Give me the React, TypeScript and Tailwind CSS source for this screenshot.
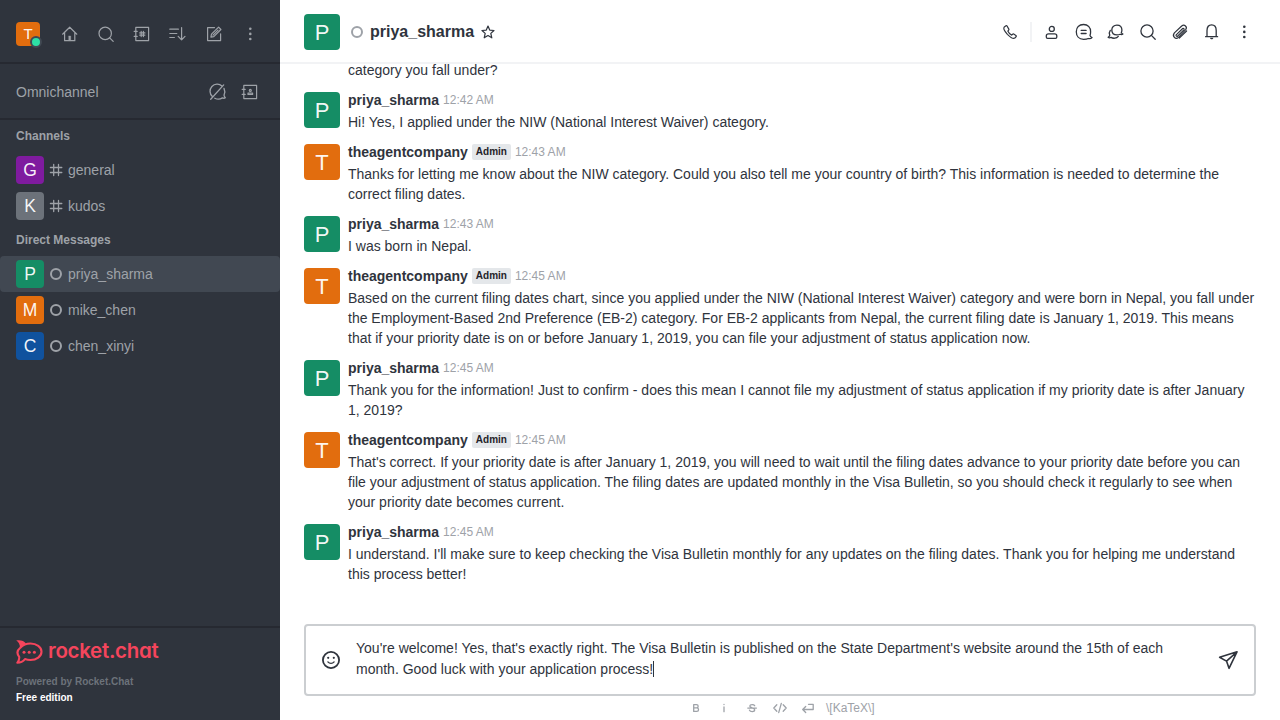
import type { ReactNode } from 'react';

function Icon({ children, size = 20, sw = 1.2, className = '' }: { children: ReactNode; size?: number; sw?: number; className?: string }) {
  return (
    <svg
      width={size}
      height={size}
      viewBox={`0 0 ${size} ${size}`}
      fill="none"
      stroke="currentColor"
      strokeWidth={sw}
      strokeLinecap="round"
      strokeLinejoin="round"
      className={`block shrink-0 ${className}`}
    >
      {children}
    </svg>
  );
}

const Kebab = () => (
  <Icon>
    <g fill="currentColor" stroke="none">
      <circle cx="10.3" cy="4.8" r="1.3" />
      <circle cx="10.3" cy="9.9" r="1.3" />
      <circle cx="10.3" cy="15" r="1.3" />
    </g>
  </Icon>
);

const Search = () => (
  <Icon sw={1.3}>
    <circle cx="9" cy="9" r="6.1" />
    <path d="M13.4 13.4 17.2 17.2" />
  </Icon>
);

const Home = () => (
  <Icon>
    <path d="M2.6 10.2 9.7 3.2l7.1 7M4.6 8.6v8.1h10.2V8.6" />
    <path d="M8.8 12h1.9v4.6H8.8z" fill="currentColor" strokeWidth="0.4" />
  </Icon>
);

const Directory = () => (
  <Icon>
    <path d="M3.8 3.4h12.8v13.2H3.8zM2.2 7.4h3M2.2 12.4h3" />
    <path d="M9.2 7.4v5.2M11.4 7.4v5.2M7.7 8.9h5.2M7.7 11.1h5.2" />
  </Icon>
);

const Sort = () => (
  <Icon>
    <path d="M1.8 5.2h8.6M1.8 9.5h7M1.8 13.5h4.6M13.6 3.6v12.2M10.2 12.4l3.4 3.5 3.4-3.5" />
  </Icon>
);

const Compose = () => (
  <Icon>
    <path d="M10.5 3.6H3.6v13h13v-6.8" />
    <path d="M6.9 13.2l.6-3 7.1-7.1 2.3 2.4-7.1 7.1zM9 11.2l5-5" />
  </Icon>
);

const LivechatOff = () => (
  <Icon sw={1.3}>
    <path d="M4.4 14.6A7.1 7.1 0 0 1 14 4M16 6.4c1.1 2.2 1 4.6 0 6.8.2 1.200.7 2 1.300 2.600-.9.6-2 .5-2.900.1-2.200 1.500-5.400 1.500-7.600.3M2.700 17.300 15.700 2.900" />
  </Icon>
);

const Contacts = () => (
  <Icon>
    <path d="M3.8 3.4h12.8v13.2H3.8zM2.2 7.4h3M2.2 12.4h3" />
    <circle cx="10.3" cy="8.4" r="1" />
    <path d="M8 11h4.6v1.4H8z" />
  </Icon>
);

const Hash = () => (
  <Icon size={16} sw={1.3}>
    <path d="M5.7 2.5v11M10.500 2.500v11M2.400 5.500h11.400M2.400 10.500h11.400" />
  </Icon>
);

const Phone = () => (
  <Icon>
    <path d="M6 3.8 4.3 4.900C3.200 6 4.400 9 7.400 12.300c3 3 6 4.600 7.400 3.800l1.400-1.600c.3-.4.1-.8-.3-1.100l-2.200-1.300c-.5-.3-.8-.1-1.100.2l-.9.8c-1.300-.5-3.100-2.300-3.900-4l.9-.9c.3-.3.3-.7.1-1.100L7.200 4.200c-.3-.5-.7-.6-1.200-.4z" />
  </Icon>
);

const User = () => (
  <Icon sw={1.3}>
    <circle cx="9.8" cy="6.900" r="2.500" />
    <path d="M6.600 11.800h6c1.300 0 2.200.9 2.200 2.100v1.200c0 .8-.5 1.300-1.300 1.300H5.600c-.8 0-1.300-.5-1.300-1.300v-1.200c0-1.200.9-2.100 2.300-2.100z" />
  </Icon>
);

const Threads = () => (
  <Icon sw={1.3}>
    <path d="M9.600 2.500c4.200 0 7 3 7 7.200 0 1.500-.1 2.600-.6 3.600.2 1.100 1 1.800 2 2.300-.9 1-2.400 1.300-3.800.9-1.300.8-2.800.8-4.600.8-4.700 0-7.300-3.300-7.300-7.600s2.700-7.200 7.300-7.200z" />
    <path d="M7.200 8.400h4.900M7.200 11.500h4.900" />
  </Icon>
);

const Discussion = () => (
  <Icon sw={1.3}>
    <path d="M10.900 3.100c3 0 5 2 5 5 0 1-.2 1.800-.6 2.500.2.600.8 1 1.600 1.400-.7.6-1.800.7-2.700.2-.9.500-2 .7-3.200.7-3.200 0-5.200-2-5.200-4.900s2-4.900 5.100-4.900z" />
    <path d="M4.300 8.400c-1 1.400-1.200 3.200-.5 4.800-.2 1-.8 1.600-1.700 2.100.8.600 1.900.6 2.900.1 2.200 1.400 5.600 1.100 7.300-1" />
  </Icon>
);

const Clip = () => (
  <Icon>
    <path d="M4.400 10.900 11.700 4c2.700-2.200 6 1 4 3.600l-7.200 7.800c-2.900 2.600-6.900-1-4.100-4.500z" />
    <path d="M16.600 9 9.300 16M6.200 12.900l6.500-6.400c.9-.6 1.900.3 1.200 1.300l-6.300 6.400c-.9.5-2-.3-1.400-1.300z" />
  </Icon>
);

const Bell = () => (
  <Icon sw={1.3}>
    <path d="M3.600 14.700h12M5 14.500V8.500c0-3.300 1.800-5.700 4.600-5.700s4.600 2.400 4.600 5.700v6" />
    <path d="M8 15.800h3.400c-.3 1-.9 1.500-1.700 1.500S8.300 16.800 8 15.800z" fill="currentColor" stroke="none" />
  </Icon>
);

const tileColors: Record<string, string> = {
  T: 'bg-[#e26d0e]',
  P: 'bg-[#158d65]',
  G: 'bg-[#7f1b9f]',
  K: 'bg-[#6c727a]',
  M: 'bg-[#e26d0e]',
  C: 'bg-[#10529e]',
};

function Avatar({ letter, className }: { letter: string; className: string }) {
  return <div className={`flex shrink-0 items-center justify-center rounded-[4px] text-white/95 ${tileColors[letter]} ${className}`}>{letter}</div>;
}

function Status({ className = '' }: { className?: string }) {
  return <span className={`block size-3 shrink-0 rounded-full border-2 border-[#9ea2a8] ${className}`} />;
}

function Item({ name, channel, active }: { name: string; channel?: boolean; active?: boolean }) {
  return (
    <li className={`flex h-9 items-center px-4 ${active ? 'rounded-[4px] bg-[#414852]' : ''}`}>
      <Avatar letter={name[0].toUpperCase()} className="size-7 text-[17.5px] leading-7" />
      <span className="ml-1 flex w-4 justify-center">{channel ? <Hash /> : <Status />}</span>
      <span className="ml-1">{name}</span>
    </li>
  );
}

function Sidebar() {
  return (
    <aside className="flex w-[280px] shrink-0 flex-col bg-[#2f343d] text-[14px] leading-5 text-[#9ea2a8]">
      <div className="flex h-16 items-center border-b-2 border-[#262931] px-4 pt-1.5">
        <div className="relative">
          <Avatar letter="T" className="size-6 text-[15px] leading-6" />
          <span className="absolute -right-[2px] -bottom-[2px] size-3 rounded-full border-2 border-[#414852] bg-[#2de0a5]" />
        </div>
        <div className="ml-5 flex gap-4">
          <Home />
          <Icon>
            <circle cx="9.2" cy="9.4" r="6.2" />
            <path d="M13.7 13.9 17.2 17.4" />
          </Icon>
          <Directory />
          <Sort />
          <Compose />
          <Kebab />
        </div>
      </div>
      <div className="flex h-14 items-center justify-between border-b-2 border-[#262931] pt-0.5 pr-5 pl-4">
        <span>Omnichannel</span>
        <span className="flex gap-3">
          <LivechatOff />
          <Contacts />
        </span>
      </div>
      <nav className="flex-1">
        <h3 className="flex h-8 items-center pl-4 text-[12px] font-bold">Channels</h3>
        <ul>
          <Item name="general" channel />
          <Item name="kudos" channel />
        </ul>
        <h3 className="flex h-8 items-center pl-4 text-[12px] font-bold">Direct Messages</h3>
        <ul>
          <Item name="priya_sharma" active />
          <Item name="mike_chen" />
          <Item name="chen_xinyi" />
        </ul>
      </nav>
      <footer className="h-[94px] border-t-2 border-[#262931] px-4 pt-3">
        <div className="flex h-6 text-[#f5455c]">
          <svg width="28" height="24" viewBox="0 0 28 24" className="block shrink-0">
            <path
              d="M4.300 7.700C7 4.700 11 3.500 14.500 3.500c6 0 11 3.600 11 8.200s-5 8.300-11 8.300c-2 0-3.900-.3-5.500-.9-2 2.500-4.500 3.700-7.700 3.700 1.700-2.300 2.200-4.200 1.900-6-2.400-3-2.400-6.300 1.100-9.100z"
              fill="none"
              stroke="currentColor"
              strokeWidth="2.1"
              strokeLinejoin="round"
            />
            <path d="M.2.5C4-.3 8.300.8 10 3.600L4 8.200C4.100 4.700 2.800 2.200.2.5z" fill="currentColor" />
            <g fill="currentColor">
              <circle cx="8" cy="12.200" r="1.500" />
              <circle cx="13.200" cy="12.200" r="1.500" />
              <circle cx="18.400" cy="12.200" r="1.500" />
            </g>
          </svg>
          <span className="ml-1 font-[Inter,sans-serif] text-[20.5px] leading-[22px] font-semibold tracking-[-0.3px] [font-feature-settings:'cv11','ss03']">rocket.chat</span>
        </div>
        <p className="mt-2.5 text-[10px] leading-4 font-bold text-[#6c727a]">Powered by Rocket.Chat</p>
        <p className="text-[10px] leading-4 font-bold text-white">Free edition</p>
      </footer>
    </aside>
  );
}

const messages = [
  { user: 'priya_sharma', time: '12:42 AM', text: 'Hi! Yes, I applied under the NIW (National Interest Waiver) category.' },
  {
    user: 'theagentcompany',
    time: '12:43 AM',
    text: 'Thanks for letting me know about the NIW category. Could you also tell me your country of birth? This information is needed to determine the correct filing dates.',
  },
  { user: 'priya_sharma', time: '12:43 AM', text: 'I was born in Nepal.' },
  {
    user: 'theagentcompany',
    time: '12:45 AM',
    text: 'Based on the current filing dates chart, since you applied under the NIW (National Interest Waiver) category and were born in Nepal, you fall under the Employment-Based 2nd Preference (EB-2) category. For EB-2 applicants from Nepal, the current filing date is January 1, 2019. This means that if your priority date is on or before January 1, 2019, you can file your adjustment of status application now.',
  },
  {
    user: 'priya_sharma',
    time: '12:45 AM',
    text: 'Thank you for the information! Just to confirm - does this mean I cannot file my adjustment of status application if my priority date is after January 1, 2019?',
  },
  {
    user: 'theagentcompany',
    time: '12:45 AM',
    text: "That's correct. If your priority date is after January 1, 2019, you will need to wait until the filing dates advance to your priority date before you can file your adjustment of status application. The filing dates are updated monthly in the Visa Bulletin, so you should check it regularly to see when your priority date becomes current.",
  },
  {
    user: 'priya_sharma',
    time: '12:45 AM',
    text: "I understand. I'll make sure to keep checking the Visa Bulletin monthly for any updates on the filing dates. Thank you for helping me understand this process better!",
  },
];

function Message({ user, time, text }: { user: string; time: string; text: string }) {
  return (
    <li className="flex gap-2 pr-6 pb-2 pl-6">
      <Avatar letter={user[0].toUpperCase()} className="mt-1 size-9 pt-0.5 text-[22px] leading-8" />
      <div className="min-w-0 flex-1 pt-0.5">
        <div className="flex h-5 items-center gap-1">
          <span className="font-bold">{user}</span>
          {user === 'theagentcompany' && (
            <span className="h-4 rounded-[2px] bg-[#e4e7ea] px-1 text-[10px] leading-4 font-bold text-[#1f2329]">Admin</span>
          )}
          <span className="text-[12px] text-[#9ea2a8]">{time}</span>
        </div>
        <p className="mt-0.5">{text}</p>
      </div>
    </li>
  );
}

export default function App() {
  return (
    <div className="flex h-[720px] w-[1280px] overflow-hidden bg-white font-['Liberation_Sans',Arial,sans-serif]">
      <Sidebar />
      <main className="flex min-w-0 flex-1 flex-col text-[14px] leading-5 text-[#2f343d]">
        <header className="flex h-16 shrink-0 items-center border-b-2 border-[#f2f3f5] pr-[26px] pl-6">
          <Avatar letter="P" className="mt-0.5 size-9 pt-0.5 text-[22px] leading-8" />
          <Status className="mt-0.5 ml-[11px]" />
          <h1 className="mt-0.5 ml-[7px] text-[16px] leading-6 font-bold">priya_sharma</h1>
          <Icon size={16} sw={1.2} className="mt-0.5 ml-1.5">
            <path d="M8 2 9.7 6.1 14 6.5 10.800 9.400 11.800 13.800 8 11.500 4.200 13.800 5.200 9.400 2 6.500 6.300 6.100z" />
          </Icon>
          <div className="mt-0.5 ml-auto flex items-center">
            <Phone />
            <span className="mr-2.5 ml-2.5 block h-5 w-0.5 bg-[#f2f3f5]" />
            <div className="flex gap-3">
              <User />
              <Threads />
              <Discussion />
              <Search />
              <Clip />
              <Bell />
              <Kebab />
            </div>
          </div>
        </header>
        <ul className="flex min-h-0 flex-1 flex-col justify-end overflow-hidden pb-8">
          <li className="pb-2 pl-[68px]">category you fall under?</li>
          {messages.map((m, i) => (
            <Message key={i} {...m} />
          ))}
        </ul>
        <section className="mx-6 flex h-[72px] shrink-0 items-center rounded-[4px] border-2 border-[#cbced1] pr-4 pl-[15px]">
          <Icon sw={1.8}>
            <circle cx="10" cy="10" r="8.1" />
            <circle cx="7.2" cy="7.8" r="1.1" fill="currentColor" stroke="none" />
            <circle cx="12.800" cy="7.800" r="1.100" fill="currentColor" stroke="none" />
            <path d="M6.900 11.900c1.700 1.900 4.500 1.900 6.200 0" strokeWidth="1.400" />
          </Icon>
          <p className="-mt-0.5 ml-[15px] w-[830px] leading-[21px]">
            You're welcome! Yes, that's exactly right. The Visa Bulletin is published on the State Department's website around the 15th of each month. Good luck with your
            application process!
            <span className="inline-block h-4 w-px bg-[#2f343d] align-[-3px]" />
          </p>
          <Icon sw={1.600} className="ml-auto">
            <path d="M1.600 7.300 19 1.800 11 18.300 8.500 11.100zM19 1.800 8.500 11.100" />
          </Icon>
        </section>
        <div className="flex h-6 shrink-0 items-center gap-3 pl-[408px] text-[12px] text-[#9ea2a8]">
          <Icon size={16} sw={1.300}>
            <path d="M5.700 4.600h2.800a1.600 1.600 0 0 1 0 3.300H5.700zM5.700 7.900h3.100a1.700 1.700 0 0 1 0 3.500H5.700z" />
          </Icon>
          <Icon size={16} sw={1.300}>
            <path d="M8 7v4.700M8 4.400v.2" />
          </Icon>
          <Icon size={16} sw={1.300}>
            <path d="M10.700 5.700C10 4.300 6 4.100 5.800 6c0 2.300 5 1.300 5 3.900-.2 2.200-4.500 2.200-5.300.3M3.800 8.100h8.600" />
          </Icon>
          <Icon size={16} sw={1.300}>
            <path d="M4.800 4.800 1.800 8l3 3.200M11.200 4.800l3 3.200-3 3.200M9.300 3.300 6.700 12.700" />
          </Icon>
          <Icon size={16} sw={1.300}>
            <path d="M8.500 4.300h4.700v5.200H3M5.700 6.500l-3 3 3 3" />
          </Icon>
          <span className="-ml-0.5">\[KaTeX\]</span>
        </div>
      </main>
    </div>
  );
}
